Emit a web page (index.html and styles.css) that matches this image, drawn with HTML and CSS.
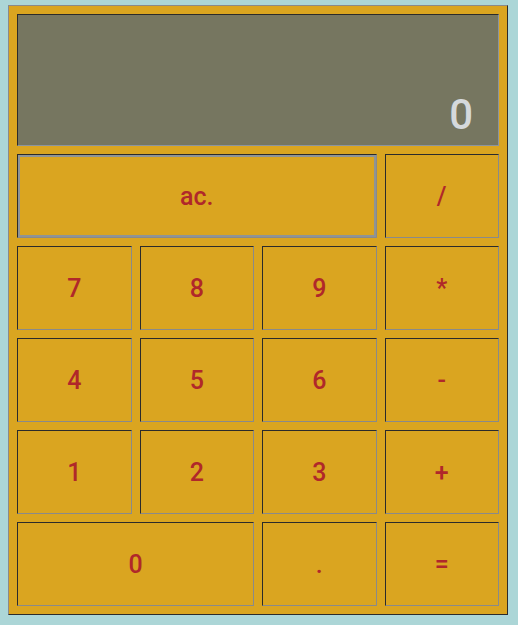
FILE: index.html
```html
<!DOCTYPE html>
<html>
<head>
<meta charset="utf-8">
<link rel="stylesheet" href="styles.css">
</head>
<body>
<div class="calc">
  <div class="display"><span class="value">0</span></div>
  <div class="keys">
    <button class="key wide focus">ac.</button>
    <button class="key">/</button>
    <button class="key">7</button>
    <button class="key">8</button>
    <button class="key">9</button>
    <button class="key">*</button>
    <button class="key">4</button>
    <button class="key">5</button>
    <button class="key">6</button>
    <button class="key">-</button>
    <button class="key">1</button>
    <button class="key">2</button>
    <button class="key">3</button>
    <button class="key">+</button>
    <button class="key zero">0</button>
    <button class="key">.</button>
    <button class="key">=</button>
  </div>
</div>
</body>
</html>
```
FILE: styles.css
```css
html, body {
  margin: 0;
  padding: 0;
}
body {
  background: #acd6d7;
  padding: 5px 8px 0 8px;
  font-family: Roboto, "Liberation Sans", sans-serif;
}
.calc {
  width: 500px;
  height: 610px;
  box-sizing: border-box;
  background: #daa520;
  border: 1px solid;
  border-color: #8a8a8a #2b2b2b #2b2b2b #8a8a8a;
  padding: 8px;
  display: flex;
  flex-direction: column;
  gap: 8px;
}
.display {
  height: 132px;
  box-sizing: border-box;
  background: #767660;
  border: 1px solid;
  border-color: #2b2b2b #8a94a0 #8a94a0 #2b2b2b;
  display: flex;
  align-items: flex-end;
  justify-content: flex-end;
  padding: 0 25px 9px 0;
}
.value {
  color: #d5d9dc;
  font-size: 42px;
  font-weight: 500;
  line-height: 1;
}
.keys {
  flex: 1;
  display: grid;
  grid-template-columns: repeat(4, 1fr);
  grid-template-rows: repeat(5, 1fr);
  gap: 8px;
}
.key {
  background: #daa520;
  border: 1px solid;
  border-color: #2b2b2b #8a8a8a #8a8a8a #2b2b2b;
  color: #b0282a;
  font-family: Roboto, "Liberation Sans", sans-serif;
  font-size: 25px;
  font-weight: 500;
  padding: 0;
  margin: 0;
}
.wide {
  grid-column: span 3;
}
.zero {
  grid-column: span 2;
}
.focus {
  box-shadow: inset 0 0 0 2px #8f9496;
}
```
